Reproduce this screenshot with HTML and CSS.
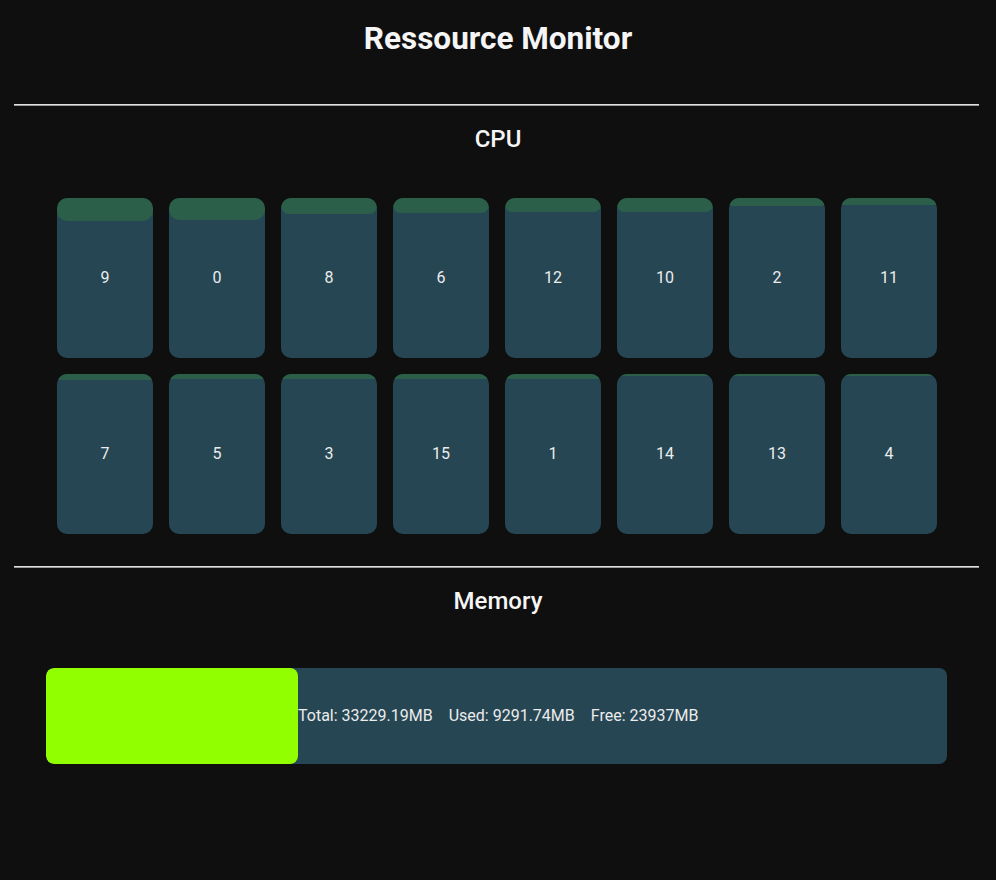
FILE: index.html
```html
<!DOCTYPE html>
<html lang="en">
<head>
<meta charset="utf-8">
<title>Ressource Monitor</title>
<link rel="stylesheet" href="styles.css">
</head>
<body>
<main class="page">
  <h1 class="title">Ressource Monitor</h1>
  <hr class="divider">
  <section class="section">
    <h2 class="section-title">CPU</h2>
    <div class="cpu-grid">
      <div class="core"><div class="core-fill" style="height:23px"></div><span class="core-label">9</span></div>
      <div class="core"><div class="core-fill" style="height:22px"></div><span class="core-label">0</span></div>
      <div class="core"><div class="core-fill" style="height:16px"></div><span class="core-label">8</span></div>
      <div class="core"><div class="core-fill" style="height:15px"></div><span class="core-label">6</span></div>
      <div class="core"><div class="core-fill" style="height:14px"></div><span class="core-label">12</span></div>
      <div class="core"><div class="core-fill" style="height:14px"></div><span class="core-label">10</span></div>
      <div class="core"><div class="core-fill" style="height:8px"></div><span class="core-label">2</span></div>
      <div class="core"><div class="core-fill" style="height:7px"></div><span class="core-label">11</span></div>
      <div class="core"><div class="core-fill" style="height:6px"></div><span class="core-label">7</span></div>
      <div class="core"><div class="core-fill" style="height:5px"></div><span class="core-label">5</span></div>
      <div class="core"><div class="core-fill" style="height:5px"></div><span class="core-label">3</span></div>
      <div class="core"><div class="core-fill" style="height:5px"></div><span class="core-label">15</span></div>
      <div class="core"><div class="core-fill" style="height:5px"></div><span class="core-label">1</span></div>
      <div class="core"><div class="core-fill" style="height:2px"></div><span class="core-label">14</span></div>
      <div class="core"><div class="core-fill" style="height:2px"></div><span class="core-label">13</span></div>
      <div class="core"><div class="core-fill" style="height:2px"></div><span class="core-label">4</span></div>
    </div>
  </section>
  <hr class="divider divider-second">
  <section class="section">
    <h2 class="section-title">Memory</h2>
    <div class="memory-bar">
      <div class="memory-used" style="width:252px"></div>
      <div class="memory-text">
        <span>Total: 33229.19MB</span>
        <span>Used: 9291.74MB</span>
        <span>Free: 23937MB</span>
      </div>
    </div>
  </section>
</main>
</body>
</html>
```

FILE: styles.css
```css
* {
  box-sizing: border-box;
}

html, body {
  margin: 0;
  padding: 0;
  background: #0f0f0f;
}

body {
  font-family: Roboto, "Liberation Sans", sans-serif;
  color: #f2f2f2;
  width: 996px;
  height: 880px;
}

.page {
  display: flex;
  flex-direction: column;
  align-items: stretch;
  padding-top: 20px;
}

.title {
  margin: 0;
  font-size: 31.5px;
  line-height: 38px;
  font-weight: 700;
  text-align: center;
  color: #f5f5f5;
}

.divider {
  margin: 46px 0 0 14px;
  width: 965px;
  height: 2px;
  border: 0;
  border-top: 1px solid #e0e0e0;
  border-bottom: 1px solid #9a9a9a;
}

.divider-second {
  margin-top: 32px;
}

.section {
  display: flex;
  flex-direction: column;
  align-items: center;
}

.section-title {
  margin: 19px 0 0;
  font-size: 24px;
  line-height: 28px;
  font-weight: 500;
  color: #f5f5f5;
}

.cpu-grid {
  margin-top: 45px;
  display: grid;
  grid-template-columns: repeat(8, 96px);
  grid-auto-rows: 160px;
  gap: 16px;
  margin-left: -2px;
}

.core {
  display: grid;
  background: #264653;
  border-radius: 10px;
  overflow: hidden;
}

.core-fill,
.core-label {
  grid-area: 1 / 1;
}

.core-fill {
  align-self: start;
  background: #2b5f4a;
  border-radius: 10px;
}

.core-label {
  place-self: center;
  margin-bottom: 2px;
  font-size: 16px;
  color: #ececec;
}

.memory-bar {
  margin-top: 53px;
  margin-left: -3px;
  width: 901px;
  height: 96px;
  display: flex;
  align-items: center;
  background: #264653;
  border-radius: 8px;
  overflow: hidden;
}

.memory-used {
  align-self: stretch;
  background: #91ff00;
  border-radius: 8px;
  flex: none;
}

.memory-text {
  display: flex;
  gap: 16px;
  margin-bottom: 2px;
  font-size: 16px;
  color: #ececec;
}
```
